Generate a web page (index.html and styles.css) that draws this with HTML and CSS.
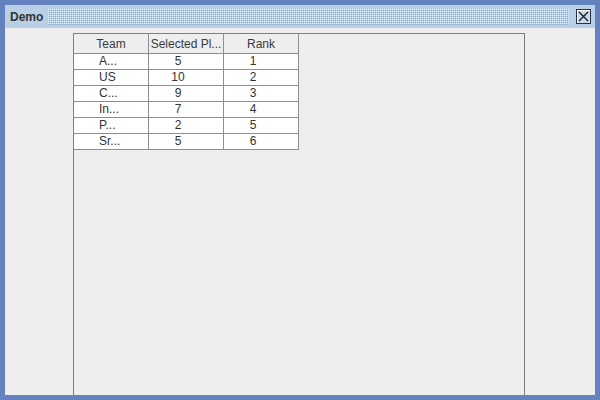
FILE: index.html
```html
<!doctype html>
<html lang="en">
    <head>
        <meta charset="UTF-8" />
        <title>Demo</title>
        <link rel="stylesheet" href="styles.css">
    </head>
    <body>
        <div class="frame">
            <div class="title-bar">
                <span class="title">Demo</span>
                <div class="bumps"></div>
                <div class="close-btn">
                    <svg width="13" height="13" viewBox="0 0 13 13">
                        <path d="M2 2 L11 11 M11 2 L2 11" stroke="#1a1a1a" stroke-width="1.3" fill="none" />
                    </svg>
                </div>
            </div>

            <div class="content">
                <div class="scroll-pane">
                    <table class="grid">
                        <colgroup>
                            <col class="col" />
                            <col class="col" />
                            <col class="col" />
                        </colgroup>
                        <thead>
                            <tr>
                                <th>Team</th>
                                <th>Selected Pl...</th>
                                <th>Rank</th>
                            </tr>
                        </thead>
                        <tbody>
                            <tr><td class="team">A...</td><td>5</td><td>1</td></tr>
                            <tr><td class="team">US</td><td>10</td><td>2</td></tr>
                            <tr><td class="team">C...</td><td>9</td><td>3</td></tr>
                            <tr><td class="team">In...</td><td>7</td><td>4</td></tr>
                            <tr><td class="team">P...</td><td>2</td><td>5</td></tr>
                            <tr><td class="team">Sr...</td><td>5</td><td>6</td></tr>
                        </tbody>
                    </table>
                </div>
            </div>
        </div>
    </body>
</html>
```

FILE: styles.css
```css
body {
    margin: 0;
    font-family: "Liberation Sans", Arial, sans-serif;
    font-size: 12px;
    color: #333;
}

.frame {
    width: 600px;
    height: 400px;
    box-sizing: border-box;
    border: 5px solid #6382bf;
    background: #eeeeee;
    display: flex;
    flex-direction: column;
    overflow: hidden;
}

.title-bar {
    height: 23px;
    flex-shrink: 0;
    background: #b8cfe5;
    display: flex;
    align-items: center;
}

.title {
    font-weight: bold;
    color: #333;
    padding-left: 5px;
    padding-right: 5px;
}

.bumps {
    flex: 1;
    height: 16px;
    margin-right: 7px;
    background-color: #b8cfe5;
    background-image:
        radial-gradient(circle at 0.5px 0.5px, #eef3f9 0.7px, transparent 0.9px),
        radial-gradient(circle at 1.5px 1.5px, #8aa5cf 0.7px, transparent 0.9px);
    background-size: 2px 2px;
}

.close-btn {
    width: 13px;
    height: 13px;
    margin-right: 4px;
    border: 1px solid #22314a;
    box-shadow: inset 1px 1px 0 #ffffff;
    background: #c9d9ea;
    display: flex;
}

.content {
    flex: 1;
    padding: 5px 0 0 68px;
    min-height: 0;
}

.scroll-pane {
    width: 452px;
    height: 400px;
    box-sizing: border-box;
    border: 1px solid #7f7f7f;
    background: #eeeeee;
}

.grid {
    border-collapse: separate;
    border-spacing: 0;
    table-layout: fixed;
    width: 225px;
}

.col {
    width: 75px;
}

.grid th,
.grid td {
    padding: 0;
    border-right: 1px solid #8a8f96;
    border-bottom: 1px solid #8a8f96;
    white-space: nowrap;
    overflow: hidden;
    font-size: 12px;
}

.grid th {
    height: 19px;
    background: #eeeeee;
    font-weight: normal;
    text-align: center;
    color: #3a3a3a;
}

.grid td {
    height: 15px;
    line-height: 15px;
    background: #ffffff;
    text-align: center;
    padding-right: 16px;
}

.grid td.team {
    text-align: left;
    padding-left: 25px;
    padding-right: 0;
}
```
